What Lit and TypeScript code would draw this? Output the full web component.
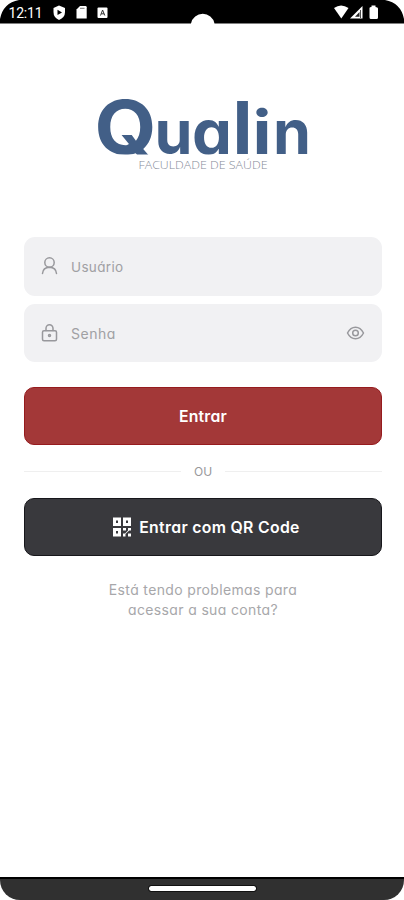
import { LitElement, html, svg, css } from "lit";
import { customElement } from "lit/decorators.js";

const wordmark = [
  { ch: "Q", x: 94.5, w: 62, size: 74 },
  { ch: "u", x: 154.5, w: 38, size: 61 },
  { ch: "a", x: 192, w: 40, size: 61 },
  { ch: "l", x: 232.5, w: 20, size: 73 },
  { ch: "i", x: 252.5, w: 19, size: 61 },
  { ch: "n", x: 273, w: 38, size: 61 },
];

@customElement("app-root")
export class AppRoot extends LitElement {
  static styles = css`
    :host { display: block; font-family: Inter, "Open Sans", sans-serif; font-feature-settings: "cv11" 1, "ss03" 1; }
    * { box-sizing: border-box; }
    svg { display: block; flex: none; }
    .screen { height: 900px; display: flex; flex-direction: column; background: #fff; overflow: hidden; }
    .status { height: 24px; flex: none; }
    .logo { height: 213px; flex: none; }
    .logo text { fill: #425f87; font-weight: 700; }
    .logo .tag { fill: #858b98; font: 300 10.3px "Open Sans", sans-serif; }
    main { flex: 1; padding: 0 22px 0 24px; display: flex; flex-direction: column; }
    .field { height: 58.5px; border-radius: 11px; background: #f1f1f3; display: flex; align-items: center; padding: 0 17px; color: #a0a0a3; font-size: 13.5px; }
    .field + .field { margin-top: 8px; }
    .field .label { flex: 1; margin-left: 13px; padding-top: 2px; letter-spacing: .35px; }
    .field .wide { font-size: 14px; letter-spacing: .5px; }
    .icon { fill: none; stroke: #98989c; stroke-width: 1.5; stroke-linecap: round; stroke-linejoin: round; }
    .button { height: 58px; border-radius: 10px; display: flex; align-items: center; justify-content: center; color: #fff; font-weight: 600; font-size: 15.8px; letter-spacing: .2px; }
    .red { margin-top: 25px; background: #a33838; border: 1px solid #961b1e; }
    .dark { background: #39393d; border: 1px solid #17171b; gap: 7px; letter-spacing: .32px; padding-left: 6px; }
    .or { height: 53px; display: flex; align-items: center; gap: 13px; color: #98989b; font-size: 12px; }
    .line { flex: 1; height: 1px; background: #efefef; }
    .help { margin-top: 24px; text-align: center; color: #a7a7aa; font-size: 14px; line-height: 20px; letter-spacing: .35px; }
    .nav { height: 23px; flex: none; background: #303030; border-top: 2px solid #000; border-radius: 0 0 20px 20px; display: flex; justify-content: center; padding-top: 7px; }
    .pill { width: 107px; height: 5px; border-radius: 2px; background: #fff; outline: 1px solid #111; }
  `;

  render() {
    return html`<div class="screen">
      <svg class="status" width="404" height="24" viewBox="0 0 404 24">
        <path d="M0 23.4V19Q3 3 19 0H385Q401 3 404 19V23.4H214.5A12 12 0 0 0 191 23.4Z" fill="#000" />
        <text x="8.5" y="18" fill="#fff" font-family="Roboto, sans-serif" font-size="14" textLength="34">12:11</text>
        <path d="M59 5.5L65 8V12Q65 17.5 59 20Q53.5 17.5 53.5 12V8Z" fill="#fff" />
        <path d="M57.5 9.8V15L62 12.4Z" fill="#000" />
        <path d="M76.5 9.5L80 6H85.5Q86.7 6 86.7 7.2V18.5H76.5Z" fill="#fff" />
        <path d="M80 8.3H84.5" stroke="#777" />
        <rect x="97.5" y="7.5" width="10" height="10.5" rx="1" fill="#fff" />
        <path d="M100.5 15.5L102.6 10L104.8 15.5M101.3 13.8H104" stroke="#333" fill="none" />
        <path d="M334 8Q341 3 348.5 8L341.3 18.5Z" fill="#fff" />
        <path d="M350 18.5L362.5 6V18.5Z" fill="#fff" />
        <path d="M355 16.8L359.5 12V16.8Z" fill="#222" />
        <path d="M360.5 10V18" stroke="#222" stroke-width=".8" />
        <path d="M369.5 8Q369.5 7 371.5 7V5.5H375.5V7Q378 7 378 8.5V17.5Q378 19 376.5 19H371Q369.5 19 369.5 17.5Z" fill="#fff" />
      </svg>
      <svg class="logo" width="404" height="213" viewBox="0 24 404 213">
        <defs><clipPath id="baseline"><rect x="90" y="90" width="224" height="64.5" /></clipPath></defs>
        <g clip-path="url(#baseline)">
          ${wordmark.map((l) => svg`<text x=${l.x} y="153.7" font-size=${l.size} textLength=${l.w} lengthAdjust="spacingAndGlyphs">${l.ch}</text>`)}
        </g>
        <text class="tag" x="138.5" y="169" textLength="129" lengthAdjust="spacingAndGlyphs">FACULDADE DE SAÚDE</text>
      </svg>
      <main>
        <div class="field">
          <svg class="icon" width="17" height="20" viewBox="0 0 17 20"><circle cx="8.5" cy="6.5" r="4.7" /><path d="M1.5 17.5Q2 11.5 8.5 11.3Q15 11.5 15.5 17.5" /></svg>
          <span class="label">Usuário</span>
        </div>
        <div class="field">
          <svg class="icon" width="17" height="20" viewBox="0 0 17 20"><rect x="1.5" y="7.7" width="14" height="10" rx="1.5" /><path d="M5 7.5V5.2A3.5 3.5 0 0 1 12 5.2V7.5" /><circle cx="8.5" cy="12.6" r="1" /></svg>
          <span class="label wide">Senha</span>
          <svg class="icon" width="19" height="14" viewBox="0 0 19 14"><path d="M1.5 7Q4.5 1.2 9.5 1.2T17.5 7Q14.5 12.8 9.5 12.8T1.5 7Z" /><circle cx="9.5" cy="7" r="2.8" /></svg>
        </div>
        <div class="button red">Entrar</div>
        <div class="or"><span class="line"></span><span>OU</span><span class="line"></span></div>
        <div class="button dark">
          <svg width="20" height="20" viewBox="0 0 20 20" fill="#fff">
            <path fill-rule="evenodd" d="M1 .5H9V9H1ZM4 3.5V6H6V3.5ZM11 .5H19V9H11ZM14 3.5V6H16V3.5ZM1 11H9V19.5H1ZM4 14V16.5H6V14Z" />
            <path d="M11 11H14V13.5H11ZM16 11H19V13.5H17.2L13.5 17V19.5H11V16.5H13L16 13.5ZM16 16.5H19V19.5H16Z" />
          </svg>
          <span>Entrar com QR Code</span>
        </div>
        <div class="help">Está tendo problemas para<br />acessar a sua conta?</div>
      </main>
      <div class="nav"><div class="pill"></div></div>
    </div>`;
  }
}
